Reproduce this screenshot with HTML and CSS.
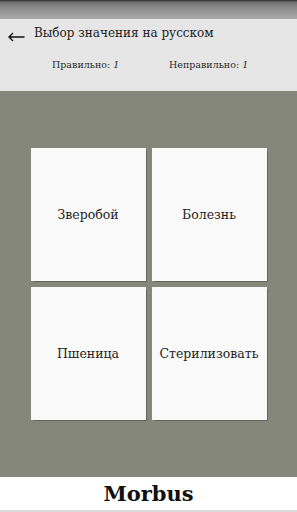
FILE: index.html
```html
<!DOCTYPE html>
<html lang="ru">
<head>
<meta charset="utf-8">
<link rel="stylesheet" href="styles.css">
</head>
<body>
<div class="app">
  <div class="statusbar"></div>
  <header class="header">
    <div class="titlerow">
      <svg class="back" width="17" height="10" viewBox="0 0 17 10"><path d="M1 5 H16.5 M5 1 L1 5 L5 9" fill="none" stroke="#111" stroke-width="1.4"/></svg>
      <span class="title">Выбор значения на русском</span>
    </div>
    <div class="scores">
      <span class="score">Правильно: <i>1</i></span>
      <span class="score">Неправильно: <i>1</i></span>
    </div>
  </header>
  <main class="main">
    <div class="grid">
      <div class="card">Зверобой</div>
      <div class="card">Болезнь</div>
      <div class="card">Пшеница</div>
      <div class="card">Стерилизовать</div>
    </div>
  </main>
  <footer class="footer">Morbus</footer>
</div>
</body>
</html>
```
FILE: styles.css
```css
html, body {
  margin: 0;
  padding: 0;
}
body {
  width: 297px;
  height: 512px;
  overflow: hidden;
  font-family: "DejaVu Serif", "Liberation Serif", serif;
  color: #1a1a1a;
}
.app {
  display: flex;
  flex-direction: column;
  height: 512px;
}
.statusbar {
  height: 19px;
  flex: none;
  background: linear-gradient(#2a2a2a 0px, #6e6e6e 2px, #8c8c8c 8px, #a9a9a9 19px);
}
.header {
  height: 72px;
  flex: none;
  background: #e6e6e6;
  box-sizing: border-box;
  padding-top: 3px;
}
.titlerow {
  display: flex;
  align-items: center;
  height: 22px;
}
.back {
  margin-left: 8px;
  margin-right: 9px;
  margin-top: 7px;
}
.title {
  font-size: 12px;
  color: #222;
}
.scores {
  display: grid;
  grid-template-columns: 117px auto;
  padding-left: 52px;
  margin-top: 15px;
  font-size: 9.5px;
  color: #2a2a2a;
}
.main {
  flex: 1;
  background: #85877a;
  display: flex;
  align-items: center;
  justify-content: center;
}
.grid {
  display: grid;
  grid-template-columns: 115px 115px;
  grid-template-rows: 133px 133px;
  gap: 5.5px 6px;
  margin-top: 0px;
}
.card {
  background: #f9f9f9;
  box-shadow: 0.5px 0.5px 1px rgba(0,0,0,0.25);
  display: flex;
  align-items: center;
  justify-content: center;
  font-size: 12.5px;
  color: #1e1e1e;
}
.footer {
  height: 33px;
  flex: none;
  background: #fff;
  border-bottom: 2px solid #dcdcdc;
  display: flex;
  align-items: center;
  justify-content: center;
  font-weight: bold;
  font-size: 21px;
  color: #111;
}
```
